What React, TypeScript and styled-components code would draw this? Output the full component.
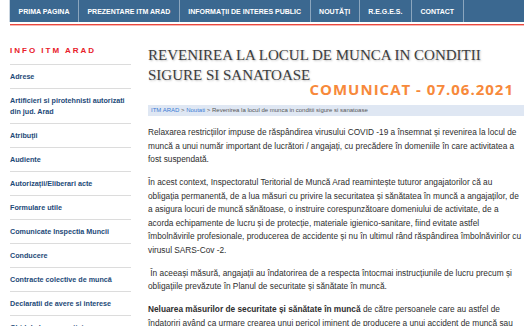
import React from 'react';
import styled, { createGlobalStyle } from 'styled-components';

const GlobalStyle = createGlobalStyle`
  html, body {
    margin: 0;
    padding: 0;
    background: #fff;
    overflow: hidden;
  }
  body {
    font-family: 'Liberation Sans', Arial, sans-serif;
  }
`;

const Page = styled.div`
  width: 524px;
  height: 326px;
  padding-left: 10px;
  box-sizing: border-box;
  overflow: hidden;
`;

const NavBar = styled.nav`
  display: flex;
  height: 22px;
  background-color: #3b6890;
  border-left: 1px solid #c9d5e0;
  margin-left: -1px;
`;

const NavItem = styled.a`
  display: flex;
  align-items: center;
  padding: 0 8.5px;
  border-right: 1px solid #8ba6be;
  color: #fff;
  font-size: 7px;
  font-weight: bold;
  white-space: nowrap;
  text-decoration: none;
`;

const RedRule = styled.div`
  margin-top: 2px;
  height: 1px;
  background-color: #e9473e;
  border-bottom: 1px solid #f8b8b2;
`;

const Main = styled.div`
  display: flex;
  gap: 17px;
`;

const Sidebar = styled.aside`
  width: 121px;
  flex-shrink: 0;
`;

const SideTitle = styled.div`
  padding: 20px 0 8px;
  line-height: 10px;
  font-size: 8px;
  font-weight: bold;
  letter-spacing: 2px;
  color: #e8202a;
  border-bottom: 1px solid #dcdcdc;
`;

const SideLink = styled.div`
  padding: 6px 0;
  line-height: 11px;
  font-size: 7.2px;
  font-weight: bold;
  color: #1d4a78;
  border-bottom: 1px solid #dcdcdc;
`;

const Content = styled.section`
  flex: 1;
  min-width: 0;
`;

const Title = styled.h1`
  margin: 19px 0 0;
  font-family: 'Liberation Serif', 'Times New Roman', serif;
  font-weight: normal;
  font-size: 15px;
  line-height: 20px;
  color: #3d3d3d;
  text-shadow: 1px 1px 2px rgba(0, 0, 0, 0.25);
`;

const Stamp = styled.div`
  margin-top: -3px;
  padding-right: 10px;
  text-align: right;
  font-family: 'Open Sans', sans-serif;
  font-weight: bold;
  font-size: 15px;
  line-height: 15px;
  letter-spacing: 1px;
  color: #f7893b;
`;

const Breadcrumb = styled.div`
  margin-top: 8px;
  height: 11px;
  line-height: 11px;
  padding-left: 3px;
  background-color: #dfe7f3;
  font-size: 6px;
  color: #555;
  white-space: nowrap;
`;

const Crumb = styled.span`
  color: #3a7bd5;
`;

const Paragraph = styled.p`
  margin: 9.5px 0 0;
  font-size: 8.3px;
  line-height: 13.5px;
  color: #2e2e2e;

  &:first-of-type {
    margin-top: 10px;
  }
`;

const navItems = [
  'PRIMA PAGINA',
  'PREZENTARE ITM ARAD',
  'INFORMAȚII DE INTERES PUBLIC',
  'NOUTĂȚI',
  'R.E.G.E.S.',
  'CONTACT',
];

const sideLinks = [
  'Adrese',
  'Artificieri si pirotehnisti autorizati din jud. Arad',
  'Atribuții',
  'Audiente',
  'Autorizații/Eliberari acte',
  'Formulare utile',
  'Comunicate Inspectia Muncii',
  'Conducere',
  'Contracte colective de muncă',
  'Declaratii de avere si interese',
  'Ghid de bune practici',
];

const App: React.FC = () => {
  return (
    <Page>
      <GlobalStyle />
      <NavBar>
        {navItems.map((item) => (
          <NavItem key={item}>{item}</NavItem>
        ))}
      </NavBar>
      <RedRule />
      <Main>
        <Sidebar>
          <SideTitle>INFO ITM ARAD</SideTitle>
          {sideLinks.map((link) => (
            <SideLink key={link}>{link}</SideLink>
          ))}
        </Sidebar>
        <Content>
          <Title>REVENIREA LA LOCUL DE MUNCA IN CONDITII SIGURE SI SANATOASE</Title>
          <Stamp>COMUNICAT - 07.06.2021</Stamp>
          <Breadcrumb>
            <Crumb>ITM ARAD</Crumb> &gt; <Crumb>Noutati</Crumb> &gt; Revenirea la locul de munca in conditii sigure si sanatoase
          </Breadcrumb>
          <Paragraph>
            Relaxarea restricțiilor impuse de răspândirea virusului COVID -19 a însemnat și revenirea la locul de
            muncă a unui număr important de lucrători / angajați, cu precădere în domeniile în care activitatea a
            fost suspendată.
          </Paragraph>
          <Paragraph>
            În acest context, Inspectoratul Teritorial de Muncă Arad reamintește tuturor angajatorilor că au
            obligația permanentă, de a lua măsuri cu privire la securitatea și sănătatea în muncă a angajaților,
            de a asigura locuri de muncă sănătoase, o instruire corespunzătoare domeniului de activitate, de a
            acorda echipamente de lucru și de protecție, materiale igienico-sanitare, fiind evitate astfel
            îmbolnăvirile profesionale, producerea de accidente și nu în ultimul rând răspândirea îmbolnăvirilor
            cu virusul SARS-Cov -2.
          </Paragraph>
          <Paragraph>
            &nbsp;În aceeași măsură, angajații au îndatorirea de a respecta întocmai instrucțiunile de lucru precum și
            obligațiile prevăzute în Planul de securitate și sănătate în muncă.
          </Paragraph>
          <Paragraph>
            <b>Neluarea măsurilor de securitate și sănătate în muncă</b> de către persoanele care au astfel de
            îndatoriri având ca urmare crearea unui pericol iminent de producere a unui accident de muncă sau
            de îmbolnăvire profesională, atrage răspunderea penală.
          </Paragraph>
        </Content>
      </Main>
    </Page>
  );
};

export default App;
